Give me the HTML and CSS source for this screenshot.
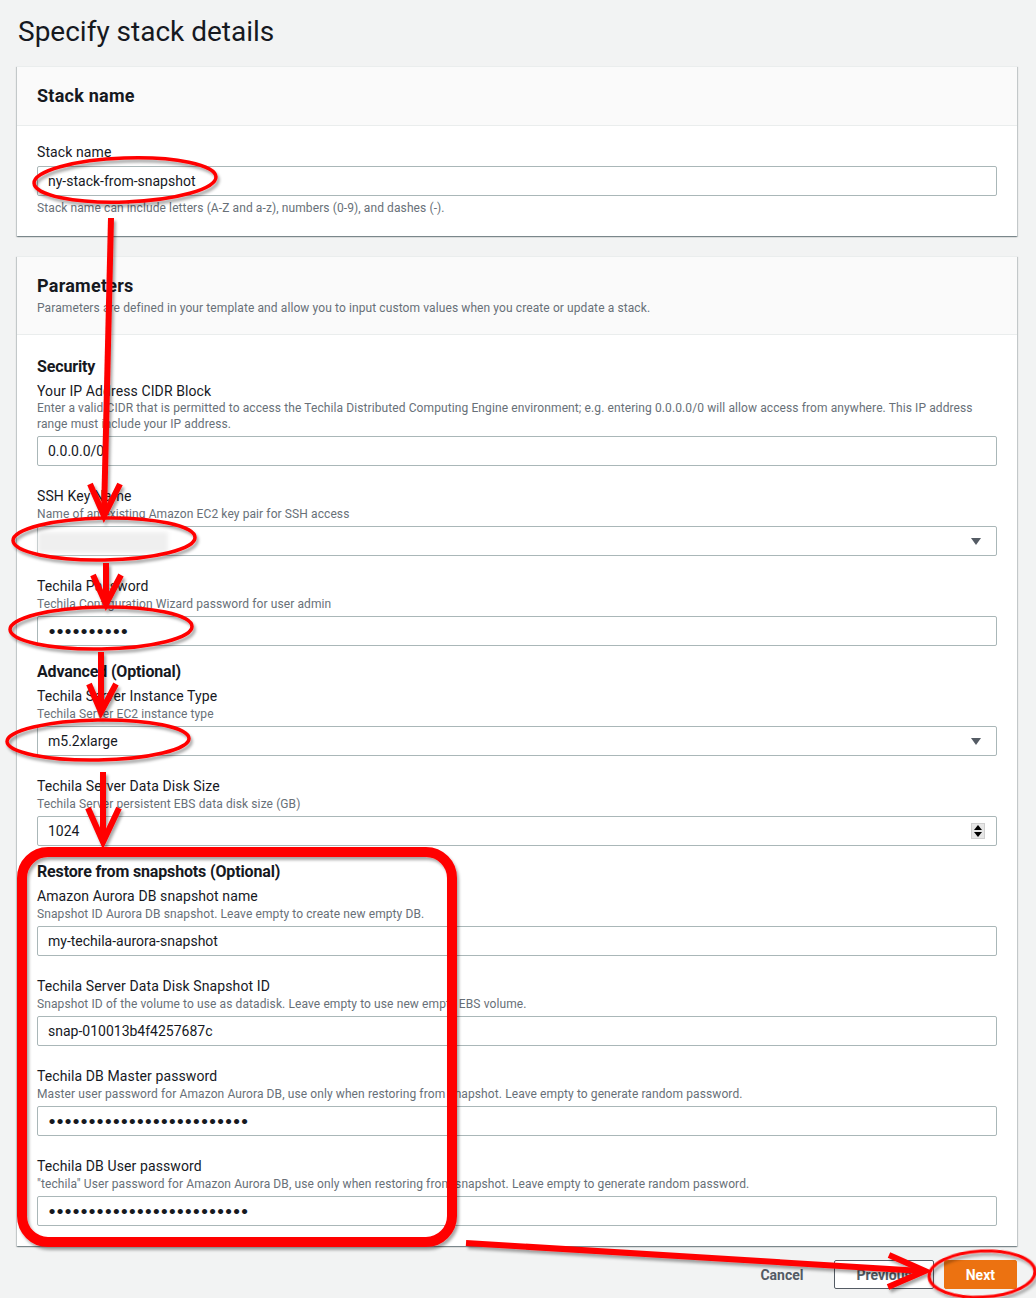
FILE: index.html
```html
<!DOCTYPE html>
<html lang="en">
<head>
  <meta charset="UTF-8">
  <title>Specify stack details</title>
  <link rel="stylesheet" href="styles.css">
</head>
<body>
  <main class="page">
    <h1 class="page-title">Specify stack details</h1>

    <section class="panel">
      <div class="panel-header">
        <h2>Stack name</h2>
      </div>
      <div class="panel-body stack-body">
        <div class="field last">
          <div class="field-label">Stack name</div>
          <div class="input">ny-stack-from-snapshot</div>
          <div class="constraint">Stack name can include letters (A-Z and a-z), numbers (0-9), and dashes (-).</div>
        </div>
      </div>
    </section>

    <section class="panel">
      <div class="panel-header">
        <h2>Parameters</h2>
        <p class="panel-desc">Parameters are defined in your template and allow you to input custom values when you create or update a stack.</p>
      </div>
      <div class="panel-body">
        <h3 class="group-title">Security</h3>
        <div class="field">
          <div class="field-label">Your IP Address CIDR Block</div>
          <div class="field-desc two-line">Enter a valid CIDR that is permitted to access the Techila Distributed Computing Engine environment; e.g. entering 0.0.0.0/0 will allow access from anywhere. This IP address<br>range must include your IP address.</div>
          <div class="input">0.0.0.0/0</div>
        </div>
        <div class="field">
          <div class="field-label">SSH Key Name</div>
          <div class="field-desc">Name of an existing Amazon EC2 key pair for SSH access</div>
          <div class="input select"><span class="redacted"></span></div>
        </div>
        <div class="field last">
          <div class="field-label">Techila Password</div>
          <div class="field-desc">Techila Configuration Wizard password for user admin</div>
          <div class="input password">••••••••••</div>
        </div>

        <h3 class="group-title">Advanced (Optional)</h3>
        <div class="field">
          <div class="field-label">Techila Server Instance Type</div>
          <div class="field-desc">Techila Server EC2 instance type</div>
          <div class="input select">m5.2xlarge</div>
        </div>
        <div class="field last">
          <div class="field-label">Techila Server Data Disk Size</div>
          <div class="field-desc">Techila Server persistent EBS data disk size (GB)</div>
          <div class="input number">1024<span class="spinner"></span></div>
        </div>

        <h3 class="group-title">Restore from snapshots (Optional)</h3>
        <div class="field">
          <div class="field-label">Amazon Aurora DB snapshot name</div>
          <div class="field-desc">Snapshot ID Aurora DB snapshot. Leave empty to create new empty DB.</div>
          <div class="input">my-techila-aurora-snapshot</div>
        </div>
        <div class="field">
          <div class="field-label">Techila Server Data Disk Snapshot ID</div>
          <div class="field-desc">Snapshot ID of the volume to use as datadisk. Leave empty to use new empty EBS volume.</div>
          <div class="input">snap-010013b4f4257687c</div>
        </div>
        <div class="field">
          <div class="field-label">Techila DB Master password</div>
          <div class="field-desc">Master user password for Amazon Aurora DB, use only when restoring from snapshot. Leave empty to generate random password.</div>
          <div class="input password">•••••••••••••••••••••••••</div>
        </div>
        <div class="field last">
          <div class="field-label">Techila DB User password</div>
          <div class="field-desc">"techila" User password for Amazon Aurora DB, use only when restoring from snapshot. Leave empty to generate random password.</div>
          <div class="input password">•••••••••••••••••••••••••</div>
        </div>
      </div>
    </section>

    <div class="actions">
      <button class="btn btn-link">Cancel</button>
      <button class="btn btn-normal">Previous</button>
      <button class="btn btn-primary">Next</button>
    </div>
  </main>

  <!-- red markup drawn over the screenshot -->
  <svg class="annotations" width="1036" height="1298" viewBox="0 0 1036 1298">
    <defs>
      <filter id="shade" x="-10%" y="-10%" width="130%" height="130%">
        <feDropShadow dx="2" dy="3" stdDeviation="1.6" flood-color="#000" flood-opacity="0.35"/>
      </filter>
    </defs>
    <g filter="url(#shade)" fill="none" stroke="#ff0000">
      <ellipse cx="125" cy="180" rx="91" ry="22" stroke-width="3.5" transform="rotate(-2 125 180)"/>
      <line x1="111" y1="218" x2="104" y2="514" stroke-width="6"/>
      <polyline points="90,484 104,516 120,484" stroke-width="6"/>

      <ellipse cx="104" cy="539" rx="91" ry="21" stroke-width="3.5" transform="rotate(-1 104 539)"/>
      <line x1="106" y1="563" x2="106" y2="602" stroke-width="6"/>
      <polyline points="93,575 106,604 121,575" stroke-width="6"/>

      <ellipse cx="101" cy="628" rx="91" ry="21" stroke-width="3.5" transform="rotate(-1 101 628)"/>
      <line x1="101" y1="652" x2="101" y2="710" stroke-width="6"/>
      <polyline points="89,684 101,712 116,684" stroke-width="6"/>

      <ellipse cx="98" cy="740" rx="91" ry="20" stroke-width="3.5" transform="rotate(-1 98 740)"/>
      <line x1="103" y1="772" x2="103" y2="840" stroke-width="6"/>
      <polyline points="88,808 103,842 119,808" stroke-width="6"/>

      <rect x="22" y="852" width="430" height="390" rx="26" stroke-width="10"/>

      <line x1="466" y1="1243" x2="922" y2="1271" stroke-width="6"/>
      <polyline points="889,1255 925,1271 888,1287" stroke-width="6"/>

      <ellipse cx="982" cy="1274" rx="53" ry="23" stroke-width="3" transform="rotate(-3 982 1274)"/>
    </g>
  </svg>
</body>
</html>
```

FILE: styles.css
```css
body {
  margin: 0;
  background: #f2f3f3;
  color: #16191f;
  font-family: Roboto, "Noto Sans", sans-serif;
}
.page {
  position: relative;
  width: 1000px;
  padding: 14px 19px 0 17px;
}
.page-title {
  margin: 0 0 16px 1px;
  font-size: 28px;
  line-height: 36px;
  font-weight: normal;
}
.panel {
  background: #fff;
  border-top: 1px solid #eaeded;
  box-shadow: 0 1px 1px 0 rgba(0,28,36,0.3), 1px 1px 1px 0 rgba(0,28,36,0.15), -1px 1px 1px 0 rgba(0,28,36,0.15);
  margin-bottom: 20px;
}
.panel-header {
  background: #fafafa;
  border-bottom: 1px solid #eaeded;
  padding: 18px 20px;
}
.panel-header h2 {
  margin: 0;
  font-size: 18px;
  line-height: 22px;
  font-weight: bold;
  letter-spacing: 0.25px;
}
.panel-desc {
  margin: 3px 0 0;
  font-size: 12px;
  line-height: 16px;
  letter-spacing: 0.1px;
  color: #687078;
}
.panel-body {
  padding: 20px 20px 20px;
}
.stack-body {
  padding-top: 16px;
}
.group-title {
  margin: 0 0 2px;
  font-size: 16px;
  line-height: 24px;
  font-weight: bold;
  letter-spacing: -0.15px;
}
.field {
  margin-bottom: 20px;
}
.field.last {
  margin-bottom: 14px;
}
.panel-body .field:last-child {
  margin-bottom: 0;
}
.field-label {
  font-size: 14px;
  line-height: 20px;
  letter-spacing: 0.1px;
}
.field-desc, .constraint {
  font-size: 12px;
  line-height: 16px;
  letter-spacing: 0.1px;
  color: #687078;
}
.field-desc.two-line {
  line-height: 15.5px;
}
.constraint {
  margin-top: 4px;
}
.input {
  position: relative;
  box-sizing: border-box;
  height: 30px;
  margin-top: 4px;
  padding: 0 10px;
  border: 1px solid #aab7b8;
  border-radius: 2px;
  background: #fff;
  font-size: 14px;
  line-height: 28px;
  color: #16191f;
}
.password {
  font-family: Lato, sans-serif;
  font-size: 14px;
  letter-spacing: -0.1px;
}
.select::after {
  content: "";
  position: absolute;
  right: 15px;
  top: 11px;
  border-left: 5px solid transparent;
  border-right: 5px solid transparent;
  border-top: 7px solid #545b64;
}
.redacted {
  display: inline-block;
  width: 130px;
  height: 21px;
  margin-left: -10px;
  vertical-align: middle;
  background: #efefef;
  filter: blur(2px);
}
.spinner {
  position: absolute;
  right: 11px;
  top: 6px;
  width: 14px;
  height: 16px;
  background: #e6e6e6;
  border: 1px solid #cfcfcf;
  box-sizing: border-box;
}
.spinner::before, .spinner::after {
  content: "";
  position: absolute;
  left: 2px;
  border-left: 4px solid transparent;
  border-right: 4px solid transparent;
}
.spinner::before {
  top: 1px;
  border-bottom: 5px solid #000;
}
.spinner::after {
  bottom: 1px;
  border-top: 5px solid #000;
}
.actions {
  display: flex;
  justify-content: flex-end;
  align-items: center;
  gap: 10px;
  margin-top: -6px;
}
.btn {
  box-sizing: border-box;
  height: 29px;
  padding: 0 21px;
  font-family: inherit;
  font-size: 14px;
  font-weight: bold;
  border-radius: 2px;
  cursor: pointer;
}
.btn-link {
  border: none;
  background: none;
  color: #545b64;
}
.btn-normal {
  border: 1px solid #545b64;
  background: #fff;
  color: #545b64;
}
.btn-primary {
  border: 1px solid #ec7211;
  background: #ec7211;
  color: #fff;
}
.annotations {
  position: absolute;
  top: 0;
  left: 0;
  pointer-events: none;
}
```
